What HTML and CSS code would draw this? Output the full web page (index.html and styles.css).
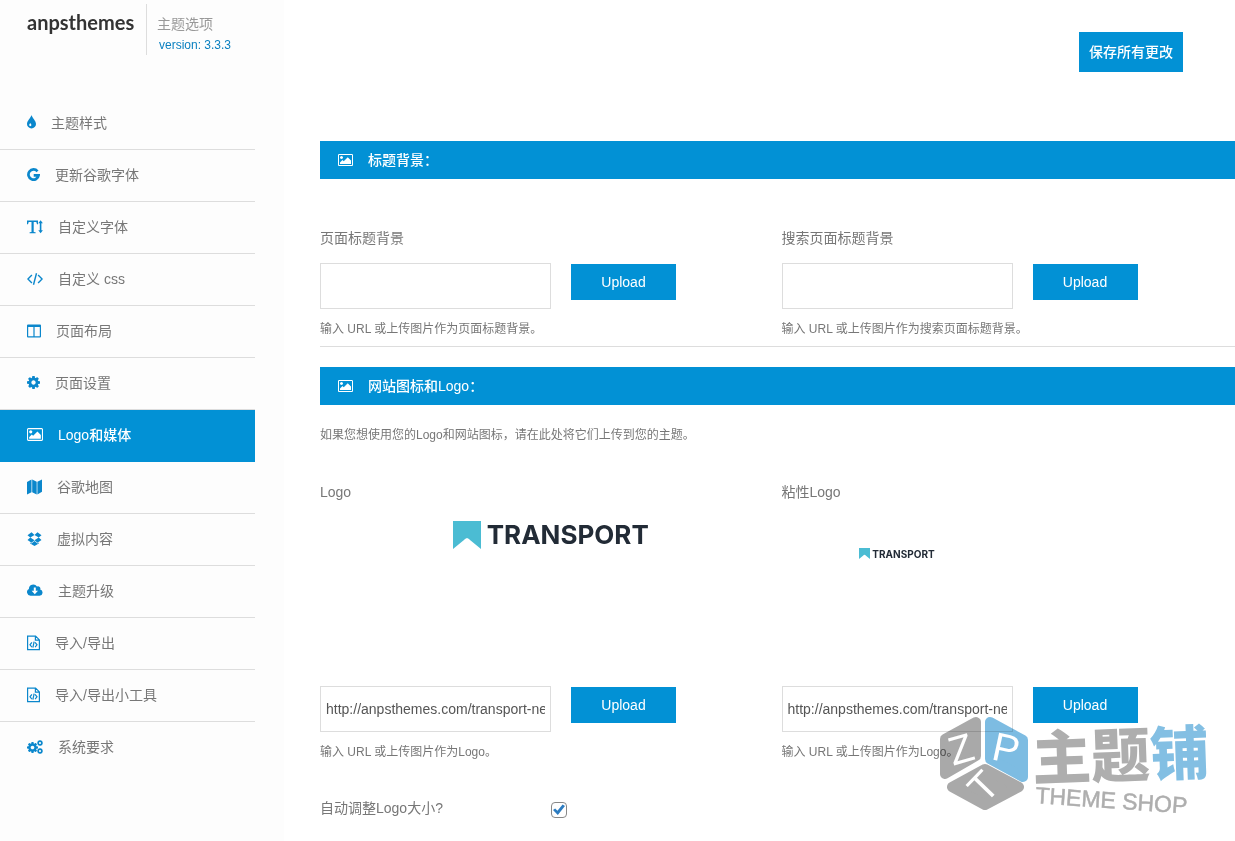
FILE: index.html
```html
<!DOCTYPE html>
<html lang="zh-CN">
<head>
<meta charset="utf-8">
<title>主题选项</title>
<link rel="stylesheet" href="styles.css">
</head>
<body>
<svg class="sprite" aria-hidden="true">
  <symbol id="picture" viewBox="64 128 1920 1536"><path d="M704 576q0 80-56 136t-136 56-136-56-56-136 56-136 136-56 136 56 56 136zm1024 384v448h-1408v-192l320-320 160 160 512-512zm96-704h-1600q-13 0-22.500 9.500t-9.500 22.500v1216q0 13 9.500 22.500t22.500 9.500h1600q13 0 22.500-9.500t9.500-22.500v-1216q0-13-9.500-22.500t-22.500-9.500zm160 32v1216q0 66-47 113t-113 47h-1600q-66 0-113-47t-47-113v-1216q0-66 47-113t113-47h1600q66 0 113 47t47 113z"/></symbol>
  <symbol id="cog" viewBox="128 128 1536 1536"><path d="M1152 896q0-106-75-181t-181-75-181 75-75 181 75 181 181 75 181-75 75-181zm512-109v222q0 12-8 23t-20 13l-185 28q-19 54-39 91 35 50 107 138 10 12 10 25t-9 23q-27 37-99 108t-94 71q-12 0-26-9l-138-108q-44 23-91 38-16 136-29 186-7 28-36 28h-222q-14 0-24.5-8.5t-11.5-21.5l-28-184q-49-16-90-37l-141 107q-10 9-25 9-14 0-25-11-126-114-165-168-7-10-7-23 0-12 8-23 15-21 51-66.5t54-70.5q-27-50-41-99l-183-27q-13-2-21-12.5t-8-23.5v-222q0-12 8-23t19-13l186-28q14-46 39-92-40-57-107-138-10-12-10-24 0-10 9-23 26-36 98.5-107.5t94.5-71.5q13 0 26 10l138 107q44-23 91-38 16-136 29-186 7-28 36-28h222q14 0 24.5 8.5t11.5 21.5l28 184q49 16 90 37l142-107q9-9 24-9 13 0 25 10 129 119 165 170 7 8 7 22 0 12-8 23-15 21-51 66.5t-54 70.5q26 50 41 98l183 28q13 2 21 12.5t8 23.5z"/></symbol>
  <symbol id="file-code" viewBox="0 0 13 16"><path fill="none" stroke="currentColor" stroke-width="1.2" d="M.6 1.1h8l3.800 3.800v9.800H.6zM8.400 1.100v4h4M4.900 7.400 3 9.800l1.900 2.400M8.100 7.400l1.900 2.400-1.900 2.400M7.100 6.700l-1.200 6"/></symbol>
  <symbol id="flag" viewBox="0 0 28 28"><path d="M0 0h28v28L17 19l-1-1-2-1-2 1-1 1L0 28z"/></symbol>
</svg>

<div class="layout">
  <aside class="sidebar">
    <header class="brand">
      <span class="brand-name">anpsthemes</span>
      <div class="brand-info">
        <span class="brand-title">主题选项</span>
        <a class="version" href="#version">version: 3.3.3</a>
      </div>
    </header>
    <nav class="menu">
      <a href="#style"><svg class="icon" width="9" height="16" viewBox="0 0 9 16"><path fill-rule="evenodd" d="M4.500 0C5.100 2.800 9 5.700 9 8.900a4.500 4.500 0 0 1-9 0C0 5.700 3.900 2.800 4.500 0zM3.200 8c-.3.900-1 1.300-1 2.100a1.100 1.100 0 0 0 2.200 0c0-.8-.8-1.200-1.200-2.100z"/></svg>主题样式</a>
      <a href="#google-fonts"><svg class="icon" width="13" height="16" viewBox="0 0 13 16"><path fill="none" stroke="currentColor" stroke-width="2.700" d="M10.500 4.300A5.100 5.100 0 1 0 11.600 8.300H6.700"/></svg>更新谷歌字体</a>
      <a href="#custom-fonts"><svg class="icon" width="16" height="16" viewBox="0 0 16 16"><path d="M0 1.500h11v3.800h-1L9.300 3H6.700v9.900l1.900.4v1H2.600v-1l1.900-.4V3H1.700L1 5.300H0zM13.600 1.300l2.300 3h-1.500v7h1.500l-2.300 3-2.300-3h1.500v-7h-1.500z"/></svg>自定义字体</a>
      <a href="#custom-css"><svg class="icon" width="16" height="16" viewBox="0 0 16 16"><path fill="none" stroke="currentColor" stroke-width="1.400" d="M4.900 4 .9 8l4 4M11.100 4l4 4-4 4M9.500 2.300l-3 11.400"/></svg>自定义 css</a>
      <a href="#layout"><svg class="icon" width="14" height="16" viewBox="0 0 14 16"><path fill-rule="evenodd" d="M1 1.500h12a1 1 0 0 1 1 1v11a1 1 0 0 1-1 1H1a1 1 0 0 1-1-1v-11a1 1 0 0 1 1-1zM1.200 4v9.300h5.200V4zM7.600 4v9.300h5.200V4z"/></svg>页面布局</a>
      <a href="#settings"><svg class="icon" width="13" height="13"><use href="#cog"/></svg>页面设置</a>
      <a class="active" href="#media" aria-current="page"><svg class="icon" width="16" height="13"><use href="#picture"/></svg>Logo和媒体</a>
      <a href="#map"><svg class="icon" width="15" height="16" viewBox="0 0 15 16"><path d="M0 3 4.500.6v12.600L0 15.400zM5.200.6l4.500 2.200v12.600l-4.500-2.200zM10.400 2.800 15 .6v12.200l-4.600 2.600z"/></svg>谷歌地图</a>
      <a href="#dummy"><svg class="icon" width="15" height="16" viewBox="0 0 15 16"><path d="M4.500 1.200 7.500 4 3.300 6.500.5 4.200zM10.500 1.200 7.500 4l4.200 2.500 2.800-2.300zM.5 8.900l2.800-2.300L7.500 9.200l-3 2.500zM14.500 8.900l-2.800-2.300-4.200 2.600 3 2.500zM7.500 10l3 2.500 1.300-.9v1L7.500 15l-4.300-2.400v-1l1.300.9z"/></svg>虚拟内容</a>
      <a href="#upgrade"><svg class="icon" width="16" height="16" viewBox="0 1 16 16"><path fill-rule="evenodd" d="M3.600 13.700A3.500 3.500 0 0 1 1.900 7.100 4.400 4.400 0 0 1 10 4.500a2.400 2.400 0 0 1 3.200 3.100 3.100 3.100 0 0 1-.6 6.100zM6.800 5.500v3.200H4.600l3.200 3.500L11 8.700H8.800V5.500z"/></svg>主题升级</a>
      <a href="#import"><svg class="icon" width="13" height="16"><use href="#file-code"/></svg>导入/导出</a>
      <a href="#widgets"><svg class="icon" width="13" height="16"><use href="#file-code"/></svg>导入/导出小工具</a>
      <a href="#system"><svg class="icon" width="16" height="16" viewBox="0 0 16 16"><use href="#cog" x="0" y="3" width="11" height="11"/><use href="#cog" x="10" y="1" width="6" height="6"/><use href="#cog" x="10" y="9" width="6" height="6"/></svg>系统要求</a>
    </nav>
  </aside>

  <main class="content">
    <div class="toolbar"><button class="button save" type="button">保存所有更改</button></div>

    <section class="panel">
      <h2 class="panel-title"><svg class="icon" width="15" height="12"><use href="#picture"/></svg>标题背景：</h2>
      <div class="columns backgrounds">
        <div class="field">
          <label for="page-bg">页面标题背景</label>
          <div class="upload"><input id="page-bg" type="text"><button class="button" type="button">Upload</button></div>
          <p class="hint">输入 URL 或上传图片作为页面标题背景。</p>
        </div>
        <div class="field">
          <label for="search-bg">搜索页面标题背景</label>
          <div class="upload"><input id="search-bg" type="text"><button class="button" type="button">Upload</button></div>
          <p class="hint">输入 URL 或上传图片作为搜索页面标题背景。</p>
        </div>
      </div>
    </section>

    <section class="panel">
      <h2 class="panel-title"><svg class="icon" width="15" height="12"><use href="#picture"/></svg>网站图标和Logo：</h2>
      <p class="intro">如果您想使用您的Logo和网站图标，请在此处将它们上传到您的主题。</p>
      <div class="columns">
        <div class="field">
          <label for="logo">Logo</label>
          <div class="preview"><div class="logo"><svg width="28" height="28"><use href="#flag"/></svg>TRANSPORT</div></div>
          <div class="upload"><input id="logo" type="text" value="http://anpsthemes.com/transport-new/logo.png"><button class="button" type="button">Upload</button></div>
          <p class="hint">输入 URL 或上传图片作为Logo。</p>
        </div>
        <div class="field">
          <label for="sticky-logo">粘性Logo</label>
          <div class="preview sticky"><div class="logo"><svg width="11" height="11"><use href="#flag"/></svg>TRANSPORT</div></div>
          <div class="upload"><input id="sticky-logo" type="text" value="http://anpsthemes.com/transport-new/logo.png"><button class="button" type="button">Upload</button></div>
          <p class="hint">输入 URL 或上传图片作为Logo。</p>
        </div>
      </div>
      <div class="resize">
        <label for="auto-resize">自动调整Logo大小?</label>
        <input id="auto-resize" type="checkbox" checked>
      </div>
    </section>
  </main>
</div>

<svg class="watermark" width="275" height="104" viewBox="0 0 275 104" role="img" aria-label="主题铺 THEME SHOP">
  <g fill="#a9a9a9" stroke="#a9a9a9" stroke-width="10" stroke-linejoin="round">
    <path d="M7 26 38 9v34L7 61z"/>
    <path d="M14 74 47 56l34 18-34 18z"/>
    <path fill="#7dbce2" stroke="#7dbce2" d="M52 9 85 27v37L52 46z"/>
  </g>
  <g class="cube-letters">
    <text x="23" y="50" transform="rotate(-16 23 36)">Z</text>
    <text x="68" y="49" transform="rotate(12 68 36)">P</text>
    <text x="46" y="87" transform="rotate(-46 46 74)">T</text>
  </g>
  <g class="mark-cn" transform="rotate(-2 95 70)">
    <text x="95" y="67">主题<tspan class="accent">铺</tspan></text>
  </g>
  <text class="mark-en" x="97" y="90" transform="rotate(4 97 90)">THEME SHOP</text>
</svg>
</body>
</html>
```
FILE: styles.css
```css
* { box-sizing: border-box; }

body {
  margin: 0;
  background: #fff;
  color: #777;
  font: 14px/20px "Liberation Sans", "Noto Sans CJK SC", sans-serif;
}

.sprite { display: none; }
.icon { flex: none; fill: currentColor; }

.layout {
  display: flex;
  min-height: 100vh;
}

/* Sidebar */
.sidebar {
  flex: none;
  width: 284px;
  background: #fdfdfd;
}

.brand {
  display: flex;
  height: 98px;
  padding: 4px 0 0 27px;
}

.brand-name {
  width: 119px;
  color: #333;
  font: bold 20px/36px Lato, sans-serif;
}

.brand-info {
  display: flex;
  flex-direction: column;
  height: 51px;
  padding: 10px 0 0 10px;
  border-left: 1px solid #ddd;
}

.brand-title { color: #999; }

.version {
  padding-left: 2px;
  color: #0b80c0;
  font-size: 12px;
  line-height: 22px;
  text-decoration: none;
}

.menu { margin-right: 29px; }

.menu a {
  display: flex;
  align-items: center;
  gap: 15px;
  height: 52px;
  padding: 0 0 2px 27px;
  border-bottom: 1px solid #ddd;
  color: #777;
  text-decoration: none;
}

.menu a:last-child { border-bottom: 0; }
.menu .icon { color: #0b87cc; }

.menu .active {
  background: #0291d5;
  border-color: #0291d5;
  color: #fff;
  font-weight: 500;
}

.menu .active .icon { color: #fff; }

/* Content */
.content {
  flex: 1;
  min-width: 0;
  padding-left: 36px;
}

.toolbar {
  display: flex;
  justify-content: flex-end;
  padding: 32px 52px 69px 0;
}

.button {
  width: 105px;
  height: 36px;
  padding: 0;
  border: 0;
  background: #0291d5;
  color: #fff;
  font: inherit;
}

.save {
  width: 104px;
  height: 40px;
  font-weight: 500;
}

.panel-title {
  display: flex;
  align-items: center;
  gap: 15px;
  height: 38px;
  margin: 0;
  padding-left: 18px;
  background: #0291d5;
  color: #fff;
  font-size: 14px;
  font-weight: 500;
}

.columns {
  display: grid;
  grid-template-columns: 1fr 1fr;
  column-gap: 8px;
}

.backgrounds {
  margin-bottom: 20px;
  padding: 49px 0 7px;
  border-bottom: 1px solid #ddd;
}

.field label { display: block; }

.upload {
  display: flex;
  gap: 20px;
  margin-top: 15px;
}

.upload input {
  width: 231px;
  height: 46px;
  padding: 0 5px;
  border: 1px solid #ddd;
  background: #fff;
  color: #555;
  font: inherit;
}

.upload .button { margin-top: 1px; }

.hint,
.intro {
  margin: 0;
  font-size: 12px;
}

.hint { margin-top: 10px; }
.intro { padding: 20px 0 37px; }

.preview {
  display: flex;
  justify-content: center;
  height: 169px;
  margin-right: -8px;
  padding-top: 19px;
}

.preview + .upload { margin-top: 15px; }

.logo {
  display: flex;
  align-items: center;
  gap: 6px;
  height: 28px;
  color: #222b36;
  font: bold 26px/28px Inter, sans-serif;
}

.logo svg { fill: #4bbcd3; }

.sticky {
  width: 231px;
  padding-top: 46px;
}

.sticky .logo {
  gap: 2px;
  height: 11px;
  font-size: 10px;
  line-height: 10px;
}

.resize {
  display: flex;
  margin-top: 36px;
}

.resize label { width: 231px; }

.resize input {
  appearance: none;
  width: 16px;
  height: 16px;
  margin: 4px 0 0;
  border: 1px solid #888;
  border-radius: 4px;
  background: #fff;
}

.resize input:checked::before {
  content: "";
  display: block;
  width: 12px;
  height: 11px;
  margin: 1px;
  background: #2c7cc1;
  clip-path: polygon(0 55%, 18% 40%, 37% 62%, 80% 5%, 100% 18%, 40% 100%);
}

/* Watermark over the page corner; the text below stays readable through it */
.watermark {
  position: absolute;
  right: 22px;
  top: 713px;
  overflow: visible;
  mix-blend-mode: multiply;
  pointer-events: none;
}

.cube-letters {
  fill: #fff;
  font: 40px "Liberation Sans", sans-serif;
  text-anchor: middle;
}

.mark-cn {
  fill: #aeaeae;
  font: 900 59px "Noto Sans CJK SC", sans-serif;
}

.accent { fill: #83bfe3; }

.mark-en {
  fill: #aeaeae;
  stroke: #aeaeae;
  stroke-width: 0.5px;
  font: 23px "Liberation Sans", sans-serif;
}
```
